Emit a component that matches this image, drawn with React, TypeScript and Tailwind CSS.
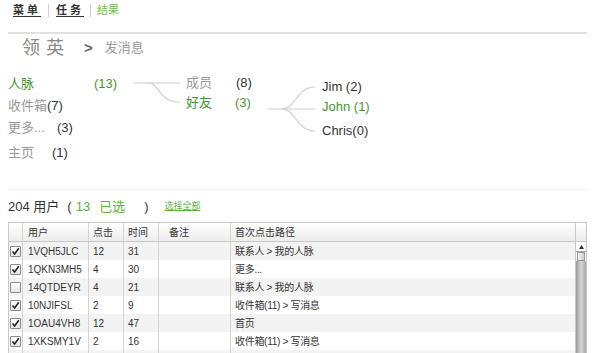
import React from "react";

const FONT = { fontFamily: '"Liberation Sans", "Noto Sans CJK SC", sans-serif' };

const rows = [
  { c: true, u: "1VQH5JLC", k: "12", t: "31", p: "联系人 > 我的人脉" },
  { c: true, u: "1QKN3MH5", k: "4", t: "30", p: "更多..." },
  { c: false, u: "14QTDEYR", k: "4", t: "21", p: "联系人 > 我的人脉" },
  { c: true, u: "10NJIFSL", k: "2", t: "9", p: "收件箱(11) > 写消息" },
  { c: true, u: "1OAU4VH8", k: "12", t: "47", p: "首页" },
  { c: true, u: "1XKSMY1V", k: "2", t: "16", p: "收件箱(11) > 写消息" },
  { c: false, u: "", k: "", t: "", p: "" },
];

function Check({ on }: { on: boolean }) {
  return (
    <div className="w-[11px] h-[11px] border border-[#8a8a8a] rounded-[1px] bg-gradient-to-b from-white to-[#e4e4e4] flex items-center justify-center">
      {on && (
        <svg width="9" height="9" viewBox="0 0 9 9">
          <path d="M1.5 4.5 L3.6 7 L7.8 1.2" stroke="#222" strokeWidth="1.6" fill="none" />
        </svg>
      )}
    </div>
  );
}

export default function App() {
  return (
    <div className="w-[600px] h-[353px] overflow-hidden bg-white" style={FONT}>
      {/* nav */}
      <div className="flex items-center h-[20px] pt-[1px] pl-[13px] text-[11px]">
        <span className="text-[#333] font-bold underline underline-offset-2 tracking-[3px]">菜单</span>
        <span className="w-px h-[13px] bg-[#ccc] mx-[7px]" />
        <span className="text-[#333] font-bold underline underline-offset-2 tracking-[3px]">任务</span>
        <span className="w-px h-[13px] bg-[#ccc] mx-[6px]" />
        <span className="text-[#6cbf45]">结果</span>
      </div>
      <div className="mx-[8px] mt-[12px] h-[2px] bg-[#e0e0e0] w-[579px]" />
      {/* title */}
      <div className="flex items-center h-[24px] mt-[2px] pl-[22px]">
        <span className="text-[18px] text-[#8a8a8a] tracking-[6px]">领英</span>
        <span className="ml-[14px] text-[15px] font-bold text-[#666]">&gt;</span>
        <span className="ml-[12px] text-[13px] text-[#999]">发消息</span>
      </div>
      {/* tree */}
      <div className="flex mt-[13px] pl-[8px] h-[111px] text-[13px]">
        <div className="w-[126px] flex flex-col">
          <div className="h-[22px] flex items-center text-[#3f9a2f]">
            <span className="w-[86px]">人脉</span>
            <span>(13)</span>
          </div>
          <div className="h-[22px] flex items-center">
            <span className="text-[#999]">收件箱</span>
            <span className="text-[#333]">(7)</span>
          </div>
          <div className="h-[22px] flex items-center">
            <span className="text-[#999] w-[49px]">更多...</span>
            <span className="text-[#333]">(3)</span>
          </div>
          <div className="h-[24px] flex items-end pb-[1px]">
            <span className="text-[#999] w-[44px]">主页</span>
            <span className="text-[#333]">(1)</span>
          </div>
        </div>
        <svg width="52" height="40" viewBox="0 0 52 40">
          <path d="M0 10 L46 10" stroke="#d0d0d0" strokeWidth="1.2" fill="none" />
          <path d="M14 10 C26 10 24 29 46 29" stroke="#d0d0d0" strokeWidth="1.2" fill="none" />
        </svg>
        <div className="w-[82px] flex flex-col">
          <div className="h-[20px] flex items-center">
            <span className="text-[#999] w-[50px]">成员</span>
            <span className="text-[#333]">(8)</span>
          </div>
          <div className="h-[20px] flex items-center text-[#3f9a2f]">
            <span className="w-[49px]">好友</span>
            <span>(3)</span>
          </div>
        </div>
        <svg width="54" height="70" viewBox="0 0 54 70">
          <path d="M0 36 L47 36" stroke="#d0d0d0" strokeWidth="1.2" fill="none" />
          <path d="M14 36 C28 36 28 14 47 14" stroke="#d0d0d0" strokeWidth="1.2" fill="none" />
          <path d="M14 36 C28 36 28 58 47 58" stroke="#d0d0d0" strokeWidth="1.2" fill="none" />
        </svg>
        <div className="flex flex-col mt-[4px]">
          <div className="h-[20px] flex items-center text-[#333]">Jim (2)</div>
          <div className="h-[20px] flex items-center text-[#3f9a2f]">John (1)</div>
          <div className="h-[28px] flex items-center text-[#333]">Chris(0)</div>
        </div>
      </div>
      <div className="mx-[8px] mt-[5px] h-px w-[579px] bg-[#f0f0f0]" />
      {/* summary */}
      <div className="flex items-center h-[18px] mt-[8px] pl-[8px] text-[13px]">
        <span className="text-[#333]">204 用户</span>
        <span className="text-[#333] ml-[8px]">(</span>
        <span className="text-[#5cb33b] ml-[4px]">13</span>
        <span className="text-[#5cb33b] ml-[9px]">已选</span>
        <span className="text-[#333] ml-[19px]">)</span>
        <span className="text-[#5cb33b] text-[9px] underline ml-[16px]">选择全部</span>
      </div>
      {/* table */}
      <div className="ml-[8px] mt-[6px] w-[579px] border border-[#c8c8c8] flex text-[10px] text-[#333]">
        <div className="flex-1">
          <div className="flex h-[19px] bg-gradient-to-b from-white to-[#ececec] border-b border-[#c8c8c8]">
            <div className="w-[14px] border-r border-[#d4d4d4]" />
            <div className="w-[66px] border-r border-[#d4d4d4] pl-[5px] flex items-center">用户</div>
            <div className="w-[35px] border-r border-[#d4d4d4] pl-[4px] flex items-center">点击</div>
            <div className="w-[35px] border-r border-[#d4d4d4] pl-[4px] flex items-center">时间</div>
            <div className="w-[72px] border-r border-[#d4d4d4] pl-[10px] flex items-center">备注</div>
            <div className="flex-1 pl-[4px] flex items-center">首次点击路径</div>
          </div>
          {rows.map((r, i) => (
            <div key={i} className={`flex h-[18px] ${i % 2 === 0 ? "bg-[#f3f3f3]" : "bg-white"}`}>
              <div className="w-[14px] border-r border-[#d4d4d4] flex items-center justify-end pr-[1px]">
                {r.u && <Check on={r.c} />}
              </div>
              <div className="w-[66px] border-r border-[#d4d4d4] pl-[5px] flex items-center">{r.u}</div>
              <div className="w-[35px] border-r border-[#d4d4d4] pl-[4px] flex items-center">{r.k}</div>
              <div className="w-[35px] border-r border-[#d4d4d4] pl-[4px] flex items-center">{r.t}</div>
              <div className="w-[72px] border-r border-[#d4d4d4] pl-[10px] flex items-center" />
              <div className="flex-1 pl-[4px] flex items-center tracking-[-0.3px]">{r.p}</div>
            </div>
          ))}
        </div>
        <div className="w-[11px] border-l border-[#c8c8c8] flex flex-col">
          <div className="h-[19px] bg-gradient-to-b from-white to-[#ececec] border-b border-[#c8c8c8]" />
          <div className="h-[10px] bg-white flex items-center justify-center border-b border-[#aaa]">
            <svg width="5" height="4" viewBox="0 0 5 4"><path d="M0 4 L2.5 0 L5 4 Z" fill="#333" /></svg>
          </div>
          <div className="h-[9px] mx-[1px] bg-gradient-to-r from-[#f4f4f4] to-[#cfcfcf] border border-[#999]" />
          <div className="flex-1 h-[120px] bg-gradient-to-r from-[#9a9a9a] via-[#d8d8d8] to-[#a8a8a8]" />
        </div>
      </div>
    </div>
  );
}
